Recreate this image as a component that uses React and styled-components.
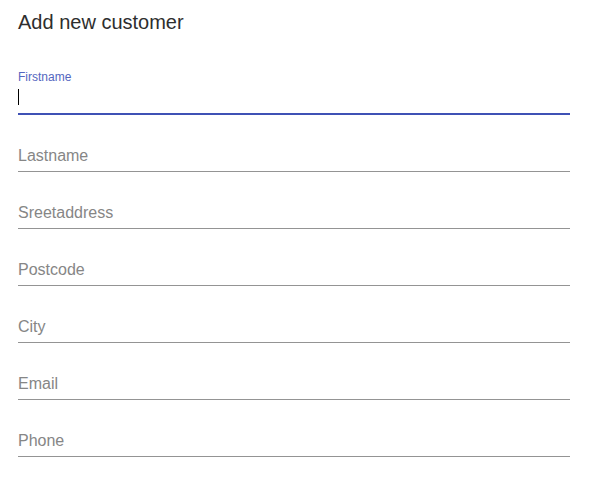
import React from "react";
import styled, { createGlobalStyle } from "styled-components";

const Global = createGlobalStyle`
  html, body { margin: 0; padding: 0; background: #fff; }
  body { font-family: "Liberation Sans", Arial, sans-serif; }
`;

const Dialog = styled.div`
  width: 592px;
  height: 489px;
  box-sizing: border-box;
  padding: 0 22px 0 18px;
  background: #fff;
`;

const Title = styled.h2`
  margin: 0;
  padding: 9px 0 0;
  height: 62px;
  box-sizing: border-box;
  font-size: 20px;
  line-height: 26px;
  font-weight: 400;
  color: #2e2e2e;
`;

const Form = styled.form`
  display: flex;
  flex-direction: column;
  margin: 0;
`;

const Field = styled.div`
  position: relative;
  margin: 8px 0 4px;
  padding-top: 16px;
`;

const Label = styled.label`
  position: absolute;
  left: 0;
  top: 0;
  font-size: 16px;
  line-height: 1;
  color: ${(p) => (p.$focused ? "#5466c0" : "#868686")};
  transform-origin: top left;
  transform: ${(p) => (p.$shrink ? "translate(0, 1.5px) scale(0.75)" : "translate(0, 21px)")};
`;

const InputBox = styled.div`
  position: relative;
  height: 29px;
  box-sizing: border-box;
  padding: 3px 0 7px;
  border-bottom: ${(p) => (p.$focused ? "2px solid #3f51b5" : "1px solid rgba(0,0,0,0.42)")};
`;

const Input = styled.input`
  display: block;
  width: 100%;
  height: 19px;
  border: 0;
  padding: 0;
  margin: 0;
  outline: none;
  background: transparent;
  font: inherit;
  font-size: 16px;
  color: rgba(0, 0, 0, 0.87);
  caret-color: transparent;
`;

const Caret = styled.span`
  position: absolute;
  left: 0;
  top: 3px;
  width: 1px;
  height: 16px;
  background: #000;
`;

const fields = ["Firstname", "Lastname", "Sreetaddress", "Postcode", "City", "Email", "Phone"];

export default function App() {
  return (
    <>
      <Global />
      <Dialog>
        <Title>Add new customer</Title>
        <Form onSubmit={(e) => e.preventDefault()}>
          {fields.map((f, i) => {
            const focused = i === 0;
            return (
              <Field key={f}>
                <Label $shrink={focused} $focused={focused}>{f}</Label>
                <InputBox $focused={focused}>
                  <Input aria-label={f} />
                  {focused && <Caret />}
                </InputBox>
              </Field>
            );
          })}
        </Form>
      </Dialog>
    </>
  );
}
